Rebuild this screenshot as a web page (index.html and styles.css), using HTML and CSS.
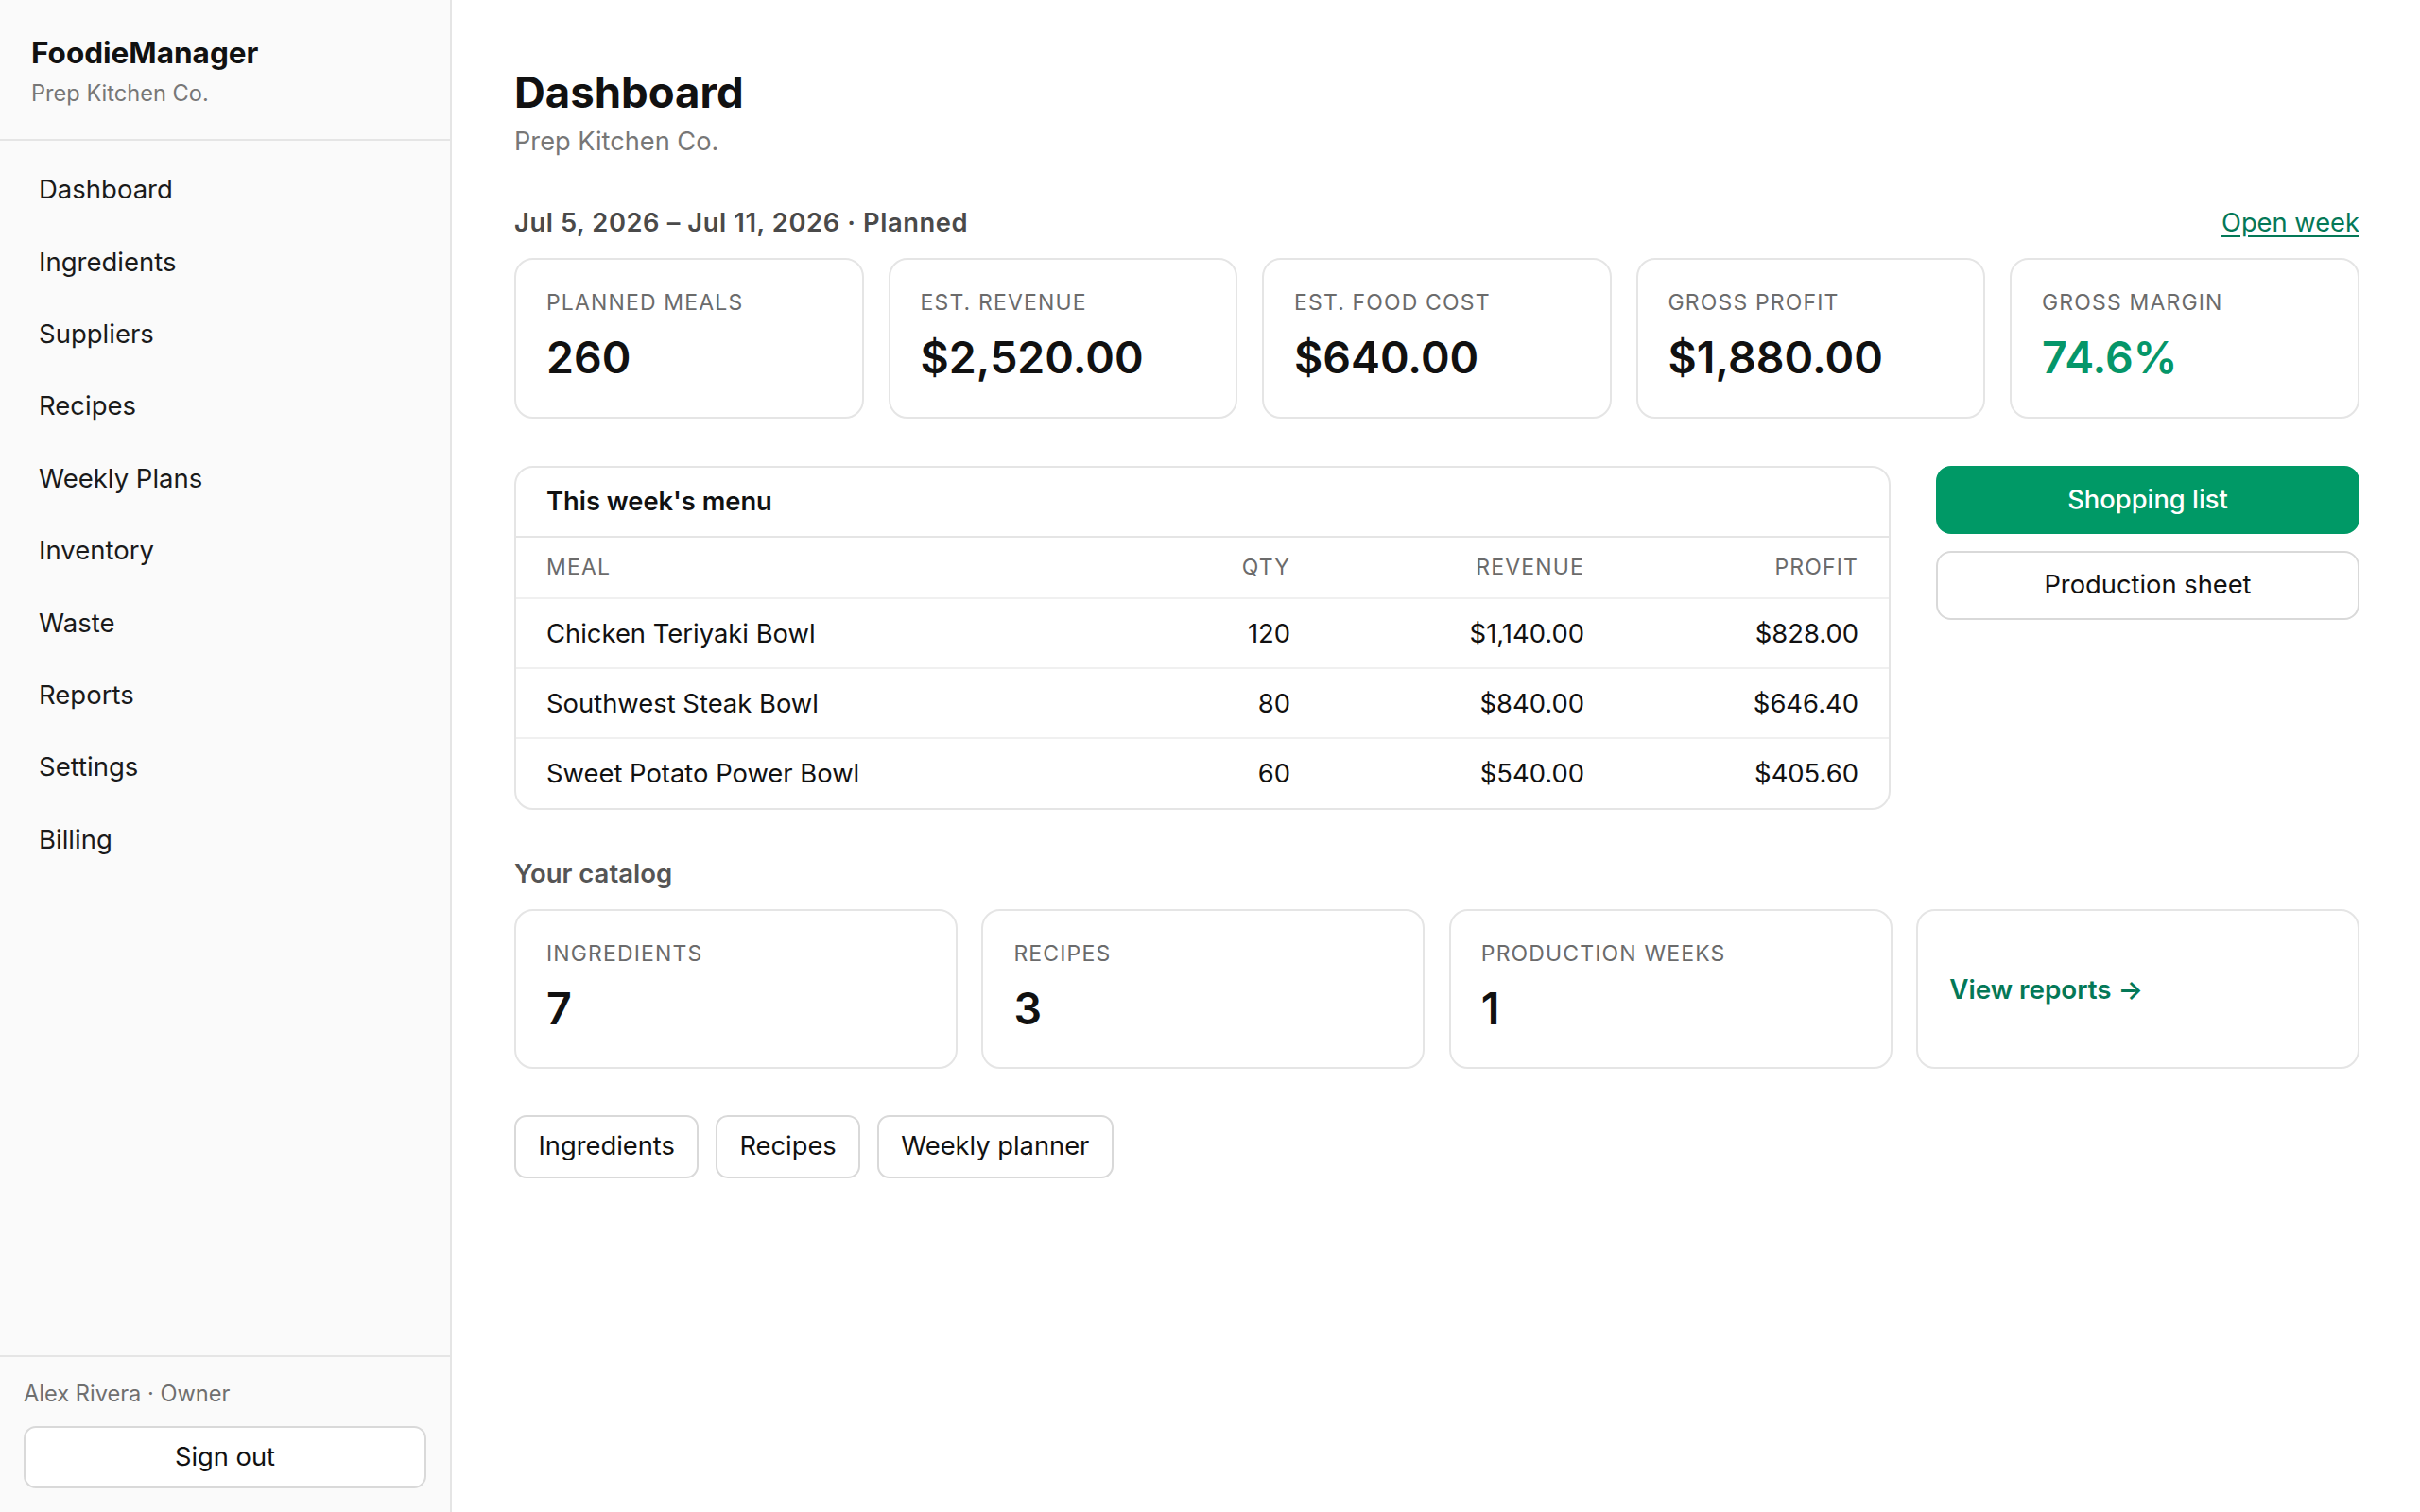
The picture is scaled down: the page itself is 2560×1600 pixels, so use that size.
FILE: index.html
```html
<!DOCTYPE html>
<html lang="en">
<head>
    <meta charset="UTF-8">
    <meta name="viewport" content="width=device-width, initial-scale=1.0">
    <title>Dashboard - FoodieManager</title>
    <link rel="stylesheet" href="styles.css">
</head>
<body>
    <aside class="sidebar">
        <div class="brand">
            <div class="brand-name">FoodieManager</div>
            <div class="brand-org">Prep Kitchen Co.</div>
        </div>
        <nav class="nav">
            <a href="#">Dashboard</a>
            <a href="#">Ingredients</a>
            <a href="#">Suppliers</a>
            <a href="#">Recipes</a>
            <a href="#">Weekly Plans</a>
            <a href="#">Inventory</a>
            <a href="#">Waste</a>
            <a href="#">Reports</a>
            <a href="#">Settings</a>
            <a href="#">Billing</a>
        </nav>
        <div class="user">
            <div class="user-name">Alex Rivera · Owner</div>
            <button class="btn btn-block">Sign out</button>
        </div>
    </aside>

    <main class="main">
        <h1>Dashboard</h1>
        <div class="page-sub">Prep Kitchen Co.</div>

        <div class="week-bar">
            <span class="week-label">Jul 5, 2026 – Jul 11, 2026 · Planned</span>
            <a href="#" class="link">Open week</a>
        </div>

        <div class="stats">
            <div class="card stat">
                <div class="stat-label">Planned meals</div>
                <div class="stat-value">260</div>
            </div>
            <div class="card stat">
                <div class="stat-label">Est. revenue</div>
                <div class="stat-value">$2,520.00</div>
            </div>
            <div class="card stat">
                <div class="stat-label">Est. food cost</div>
                <div class="stat-value">$640.00</div>
            </div>
            <div class="card stat">
                <div class="stat-label">Gross profit</div>
                <div class="stat-value">$1,880.00</div>
            </div>
            <div class="card stat">
                <div class="stat-label">Gross margin</div>
                <div class="stat-value green">74.6%</div>
            </div>
        </div>

        <div class="week-grid">
            <div class="card menu">
                <div class="menu-title">This week's menu</div>
                <table class="menu-table">
                    <colgroup>
                        <col>
                        <col class="col-qty">
                        <col class="col-rev">
                        <col class="col-profit">
                    </colgroup>
                    <thead>
                        <tr>
                            <th>Meal</th>
                            <th class="num">Qty</th>
                            <th class="num">Revenue</th>
                            <th class="num">Profit</th>
                        </tr>
                    </thead>
                    <tbody>
                        <tr>
                            <td>Chicken Teriyaki Bowl</td>
                            <td class="num">120</td>
                            <td class="num">$1,140.00</td>
                            <td class="num">$828.00</td>
                        </tr>
                        <tr>
                            <td>Southwest Steak Bowl</td>
                            <td class="num">80</td>
                            <td class="num">$840.00</td>
                            <td class="num">$646.40</td>
                        </tr>
                        <tr>
                            <td>Sweet Potato Power Bowl</td>
                            <td class="num">60</td>
                            <td class="num">$540.00</td>
                            <td class="num">$405.60</td>
                        </tr>
                    </tbody>
                </table>
            </div>
            <div class="actions">
                <button class="btn btn-primary">Shopping list</button>
                <button class="btn">Production sheet</button>
            </div>
        </div>

        <h2 class="section-title">Your catalog</h2>
        <div class="catalog">
            <div class="card stat">
                <div class="stat-label">Ingredients</div>
                <div class="stat-value">7</div>
            </div>
            <div class="card stat">
                <div class="stat-label">Recipes</div>
                <div class="stat-value">3</div>
            </div>
            <div class="card stat">
                <div class="stat-label">Production weeks</div>
                <div class="stat-value">1</div>
            </div>
            <a href="#" class="card report-link">View reports →</a>
        </div>

        <div class="quick-links">
            <button class="btn">Ingredients</button>
            <button class="btn">Recipes</button>
            <button class="btn">Weekly planner</button>
        </div>
    </main>
</body>
</html>
```

FILE: styles.css
```css
* {
    box-sizing: border-box;
}
body {
    font-family: Inter, "Noto Sans", sans-serif;
    margin: 0;
    display: flex;
    min-height: 100vh;
    color: #111;
    background-color: #fff;
}
a {
    color: inherit;
    text-decoration: none;
}

/* sidebar */
.sidebar {
    width: 478px;
    flex-shrink: 0;
    display: flex;
    flex-direction: column;
    background-color: #fafafa;
    border-right: 2px solid #e5e5e5;
}
.brand {
    padding: 37px 32px 34px 33px;
    border-bottom: 2px solid #e5e5e5;
}
.brand-name {
    font-size: 31.5px;
    font-weight: 700;
    line-height: 1.2;
}
.brand-org {
    margin-top: 10px;
    font-size: 23.6px;
    line-height: 1.2;
    color: #777;
}
.nav {
    flex: 1;
    display: flex;
    flex-direction: column;
    padding: 13px 16px;
}
.nav a {
    padding: 19px 25px;
    font-size: 27.5px;
    line-height: 38.4px;
    color: #1a1a1a;
}
.user {
    padding: 21px 25px 25px;
    border-top: 2px solid #e5e5e5;
}
.user-name {
    font-size: 23.6px;
    line-height: 1.5;
    color: #6f6f6f;
    margin-bottom: 16px;
}

/* buttons */
.btn {
    font-family: inherit;
    font-size: 27.3px;
    line-height: 38.4px;
    padding: 12px 23.5px;
    color: #111;
    background-color: #fff;
    border: 2px solid #d9d9d9;
    border-radius: 13px;
    cursor: pointer;
}
.btn-block {
    width: 100%;
}
.btn-primary {
    background-color: #009966;
    border-color: #009966;
    color: #fff;
    font-weight: 500;
}

/* main */
.main {
    flex: 1;
    padding: 71px 64px 64px 66px;
}
h1 {
    margin: 0;
    font-size: 45.5px;
    line-height: 1.2;
    font-weight: 700;
}
.page-sub {
    margin-top: 4px;
    font-size: 27.2px;
    line-height: 1.5;
    color: #777;
}
.week-bar {
    margin-top: 46px;
    display: flex;
    justify-content: space-between;
    align-items: center;
    font-size: 27.3px;
    line-height: 1.5;
}
.week-label {
    font-weight: 600;
    letter-spacing: 0.6px;
    color: #4a4a4a;
}
.link {
    color: #047857;
    text-decoration: underline;
    text-underline-offset: 4px;
}
.card {
    background-color: #fff;
    border: 2px solid #e5e5e5;
    border-radius: 20px;
}
.stats {
    margin-top: 16px;
    display: grid;
    grid-template-columns: repeat(5, 1fr);
    gap: 25.6px;
}
.stat {
    padding: 32px 32px 34px;
}
.stat-label {
    font-size: 23px;
    line-height: 1.2;
    text-transform: uppercase;
    letter-spacing: 0.05em;
    color: #6b6b6b;
}
.stat-value {
    margin-top: 16px;
    font-size: 46.5px;
    line-height: 1.2;
    font-weight: 600;
}
.green {
    color: #059669;
}

/* weekly menu */
.week-grid {
    margin-top: 50px;
    display: grid;
    grid-template-columns: 1fr 448px;
    gap: 48px;
    align-items: start;
}
.menu {
    overflow: hidden;
}
.menu-title {
    padding: 17px 32px;
    font-size: 27.3px;
    line-height: 38px;
    font-weight: 600;
    border-bottom: 2px solid #e5e5e5;
}
.menu-table {
    width: 100%;
    border-collapse: collapse;
    font-size: 27.4px;
}
.col-qty {
    width: 200px;
}
.col-rev {
    width: 311px;
}
.col-profit {
    width: 321px;
}
.menu-table th {
    height: 64px;
    font-size: 23px;
    font-weight: 400;
    text-transform: uppercase;
    letter-spacing: 0.05em;
    color: #6b6b6b;
    text-align: left;
}
.menu-table td {
    height: 74px;
    border-top: 2px solid #f0f0f0;
}
.menu-table th:first-child,
.menu-table td:first-child {
    padding-left: 32px;
}
.menu-table th:last-child,
.menu-table td:last-child {
    padding-right: 32px;
}
.menu-table .num {
    text-align: right;
}
.actions {
    display: flex;
    flex-direction: column;
    gap: 18px;
}
.actions .btn {
    padding: 15px 22px;
    border-radius: 16px;
}

/* catalog */
.section-title {
    margin: 47px 0 0;
    font-size: 27.5px;
    line-height: 1.5;
    font-weight: 600;
    color: #555;
}
.catalog {
    margin-top: 17px;
    display: grid;
    grid-template-columns: repeat(4, 1fr);
    gap: 25.6px;
}
.report-link {
    display: flex;
    align-items: center;
    padding: 0 33px;
    font-size: 27.8px;
    font-weight: 600;
    color: #047857;
}
.quick-links {
    margin-top: 49px;
    display: flex;
    gap: 17.5px;
}
```
